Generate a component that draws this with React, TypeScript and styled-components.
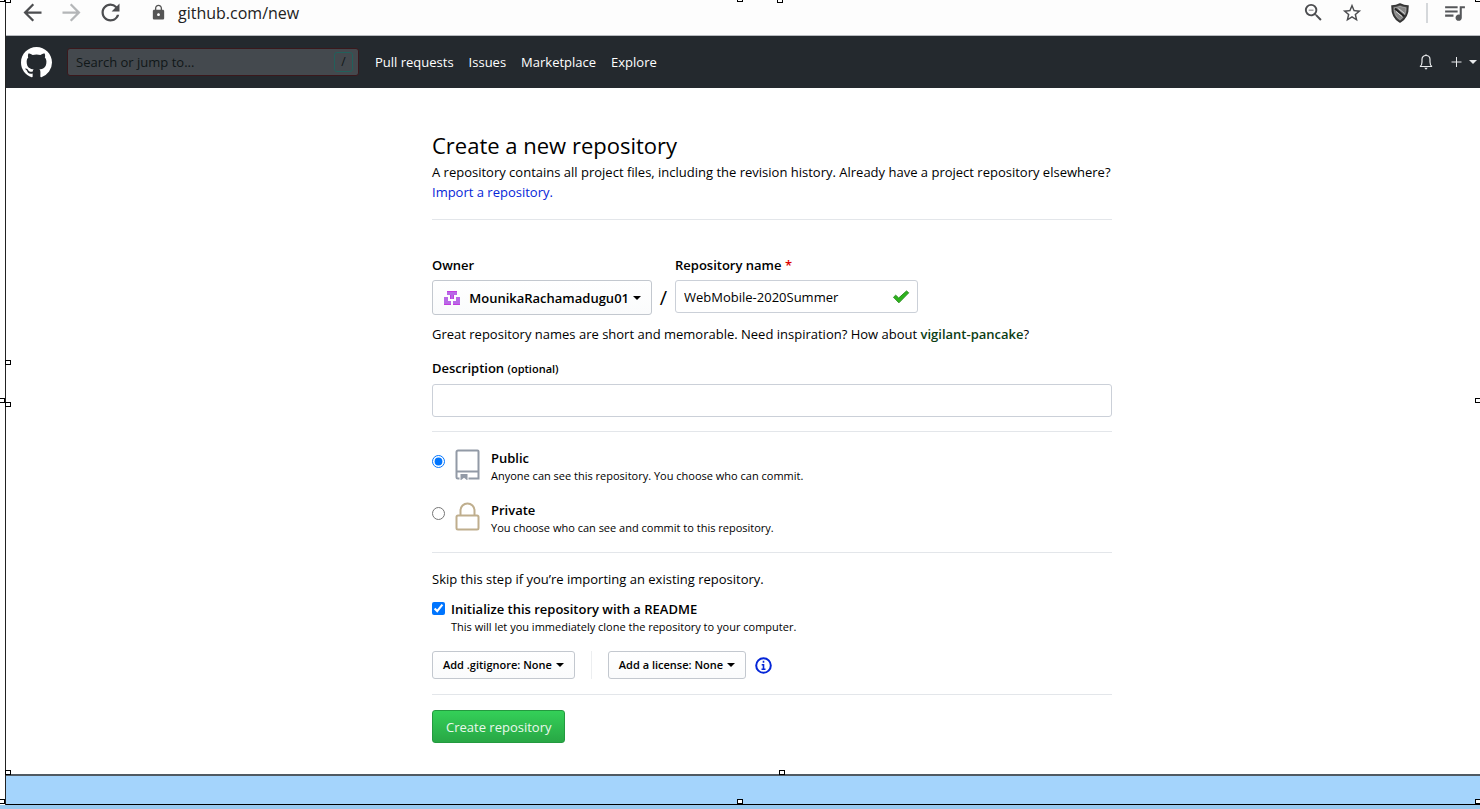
import React from "react";
import styled, { createGlobalStyle } from "styled-components";
import {
  MdArrowBack,
  MdArrowForward,
  MdLock,
  MdQueueMusic,
  MdRefresh,
  MdStarBorder,
  MdZoomOut,
} from "react-icons/md";

const GlobalStyle = createGlobalStyle`
  *, *::before, *::after { box-sizing: border-box; }
  body {
    margin: 0;
    background: #fff;
    color: #000;
    font-family: "Open Sans", "Noto Sans", sans-serif;
    font-size: 13px;
    line-height: 20px;
  }
  button, input { font: inherit; color: inherit; margin: 0; }
  a { text-decoration: none; }
  h1, p { margin: 0; }
  svg { display: block; flex: none; }
`;

const Canvas = styled.div`
  position: relative;
  display: flex;
  flex-direction: column;
  min-height: 100vh;
  overflow: hidden;
`;

const Frame = styled.div`
  flex: 1;
  display: flex;
  flex-direction: column;
  margin-left: 5px;
  border-left: 1px solid #222;
`;

const BrowserBar = styled.div`
  display: flex;
  align-items: center;
  height: 36px;
  padding: 0 13px 10px 13px;
  border-bottom: 1px solid #b8bbc0;
  background: #fdfdfd;
`;

const IconButton = styled.button<{ $tone?: string }>`
  display: flex;
  align-items: center;
  justify-content: center;
  width: 26px;
  height: 26px;
  padding: 0;
  border: 0;
  background: none;
  color: ${(p) => p.$tone ?? "#4c4d50"};
`;

const BrowserNav = styled.div`
  display: flex;
  gap: 13px;
`;

const Address = styled.div`
  flex: 1;
  display: flex;
  align-items: center;
  gap: 11px;
  margin-left: 27px;
  color: #222;
  font-size: 16px;
`;

const BrowserTools = styled.div`
  display: flex;
  align-items: center;
  gap: 13px;
`;

const PageActions = styled.div`
  display: flex;
  gap: 13px;
  margin-right: 9px;
`;

const ToolDivider = styled.span`
  width: 2px;
  height: 20px;
  background: #d5d8db;
`;

const SiteHeader = styled.header`
  display: flex;
  align-items: center;
  height: 52px;
  padding: 0 3px 0 15px;
  background: #24292e;
  color: #fff;
`;

const LogoLink = styled.a`
  color: #fff;
`;

const SearchBox = styled.label`
  display: flex;
  align-items: center;
  width: 292px;
  height: 28px;
  margin-left: 15px;
  padding: 0 5px 0 8px;
  border: 1px solid #3a181c;
  border-radius: 3px;
  background: #44494e;
  color: #101718;
`;

const SearchInput = styled.input`
  flex: 1;
  min-width: 0;
  padding: 0;
  border: 0;
  outline: 0;
  background: none;
  &::placeholder { color: #101718; opacity: 1; }
`;

const SlashKey = styled.span`
  width: 19px;
  height: 20px;
  border: 1px solid #22605b;
  border-radius: 3px;
  font-size: 12px;
  line-height: 18px;
  text-align: center;
`;

const SiteNav = styled.nav`
  flex: 1;
  display: flex;
  gap: 15px;
  margin-left: 16px;
`;

const NavLink = styled.a`
  color: #fff;
`;

const HeaderTools = styled.div`
  display: flex;
  align-items: center;
  gap: 18px;
`;

const HeaderButton = styled.button`
  display: flex;
  align-items: center;
  gap: 6px;
  padding: 0;
  border: 0;
  background: none;
  color: #e8eaec;
`;

const Caret = styled.span`
  width: 0;
  border: 4px solid transparent;
  border-top-color: currentColor;
  border-bottom: 0;
`;

const Main = styled.main`
  flex: 1;
  display: grid;
  grid-template-columns: 426fr minmax(0, 680px) 368fr;
  padding: 42px 0 30px;
`;

const Form = styled.form`
  grid-column: 2;
`;

const Title = styled.h1`
  margin-bottom: 2px;
  font-size: 22px;
  font-weight: 400;
  line-height: 30px;
`;

const TextLink = styled.a`
  color: #0526d8;
`;

const Rule = styled.hr<{ $top: number; $bottom: number }>`
  height: 1px;
  margin: ${(p) => p.$top}px 0 ${(p) => p.$bottom}px;
  border: 0;
  background: #e3e6ea;
`;

const OwnerRow = styled.div`
  display: flex;
  align-items: flex-start;
`;

const Field = styled.div`
  display: flex;
  flex-direction: column;
  gap: 5px;
`;

const FieldLabel = styled.label`
  font-weight: 600;
`;

const Required = styled.span`
  color: #d00;
`;

const Optional = styled.span`
  font-size: 11px;
`;

const MenuButton = styled.button<{ $large?: boolean }>`
  display: flex;
  align-items: center;
  justify-content: center;
  gap: 4px;
  height: ${(p) => (p.$large ? 35 : 28)}px;
  padding: 0 10px;
  border: 1px solid #c3c8cf;
  border-radius: 3px;
  background: linear-gradient(#fff, #fafbfc);
  font-size: ${(p) => (p.$large ? 13 : 11)}px;
  font-weight: 600;
  white-space: nowrap;
`;

const OwnerButton = styled(MenuButton)`
  justify-content: flex-end;
  width: 220px;
`;

const OwnerName = styled.span`
  margin-left: 4px;
`;

const Slash = styled.span`
  width: 23px;
  margin-top: 25px;
  font-size: 20px;
  line-height: 35px;
  text-align: center;
`;

const InputShell = styled.div`
  display: flex;
  align-items: center;
  width: 243px;
  height: 33px;
  padding: 0 7px 0 8px;
  border: 1px solid #cbd0d8;
  border-radius: 3px;
`;

const BareInput = styled.input`
  flex: 1;
  min-width: 0;
  padding: 0;
  border: 0;
  outline: 0;
  background: none;
`;

const Hint = styled.p`
  margin: 9px 0 14px;
`;

const Suggestion = styled.strong`
  color: #0b3d14;
  font-weight: 600;
`;

const TextInput = styled.input`
  width: 100%;
  height: 33px;
  padding: 0 8px;
  border: 1px solid #cbd0d8;
  border-radius: 3px;
`;

const Choices = styled.div`
  display: flex;
  flex-direction: column;
  gap: 16px;
`;

const Choice = styled.label`
  display: grid;
  grid-template-columns: 13px 26px 1fr;
  column-gap: 10px;
  align-items: start;
`;

const Tick = styled.input`
  width: 13px;
  height: 13px;
`;

const ChoiceRadio = styled(Tick)`
  margin-top: 7px;
`;

const ChoiceText = styled.span`
  display: flex;
  flex-direction: column;
`;

const ChoiceName = styled.span`
  font-weight: 600;
`;

const Note = styled.span`
  font-size: 11px;
  line-height: 16px;
`;

const ReadmeOption = styled.label`
  display: grid;
  grid-template-columns: 13px 1fr;
  column-gap: 6px;
  align-items: start;
  margin-top: 10px;
`;

const ReadmeTick = styled(Tick)`
  margin-top: 3px;
`;

const TemplateRow = styled.div`
  display: flex;
  align-items: center;
  margin-top: 16px;
`;

const TemplateDivider = styled.span`
  width: 1px;
  height: 28px;
  margin: 0 16px;
  background: #eceef0;
`;

const InfoButton = styled.button`
  margin-left: 9px;
  padding: 0;
  border: 0;
  background: none;
  color: #0526d8;
`;

const SubmitButton = styled.button`
  height: 33px;
  padding: 0 13px;
  border: 1px solid #239a3f;
  border-radius: 3px;
  background: linear-gradient(#34d058, #28a745);
  color: #e9f8ec;
  white-space: nowrap;
`;

const Desktop = styled.div`
  height: 31px;
  border-top: 2px solid #505a62;
  border-bottom: 1px solid #000;
  background: #a4d4fc;
`;

const BottomStrip = styled.div`
  height: 4px;
  background: #98c9ef;
`;

const Handle = styled.span<{ $x: string; $y: string }>`
  position: absolute;
  left: ${(p) => p.$x};
  top: ${(p) => p.$y};
  width: 6px;
  height: 5px;
  border: 1px solid #000;
  background: #fff;
`;

const handles: [string, string][] = [
  ["-1px", "-3px"],
  ["5px", "-2px"],
  ["calc(50% - 3px)", "-3px"],
  ["calc(50% + 37px)", "-2px"],
  ["calc(100% - 5px)", "-3px"],
  ["5px", "360px"],
  ["-1px", "398px"],
  ["5px", "402px"],
  ["calc(100% - 5px)", "398px"],
  ["5px", "calc(100% - 39px)"],
  ["calc(50% + 39px)", "calc(100% - 39px)"],
  ["-1px", "calc(100% - 10px)"],
  ["calc(50% - 3px)", "calc(100% - 10px)"],
  ["calc(100% - 5px)", "calc(100% - 10px)"],
];

const GithubMark = () => (
  <svg width="31" height="31" viewBox="0 0 16 16" fill="currentColor">
    <path d="M8 0C3.58 0 0 3.58 0 8c0 3.54 2.29 6.53 5.47 7.59.4.07.55-.17.55-.38 0-.19-.01-.82-.01-1.49-2.01.37-2.53-.49-2.69-.94-.09-.23-.48-.94-.82-1.13-.28-.15-.68-.52-.01-.53.63-.01 1.08.58 1.23.82.72 1.21 1.87.87 2.33.66.07-.52.28-.87.51-1.07-1.78-.2-3.64-.89-3.64-3.95 0-.87.31-1.59.82-2.15-.08-.2-.36-1.02.08-2.12 0 0 .67-.21 2.2.82.64-.18 1.32-.27 2-.27.68 0 1.36.09 2 .27 1.53-1.04 2.2-.82 2.2-.82.44 1.1.16 1.92.08 2.12.51.56.82 1.27.82 2.15 0 3.07-1.87 3.75-3.65 3.95.29.25.54.73.54 1.48 0 1.07-.01 1.93-.01 2.2 0 .21.15.46.55.38A8.013 8.013 0 0016 8c0-4.42-3.58-8-8-8z" />
  </svg>
);

const BellIcon = () => (
  <svg width="14" height="16" viewBox="0 0 14 16" fill="none" stroke="currentColor">
    <path d="M1 12.500c1.500-.8 2-2 2-4.500V5.500C3 3 4.500 1.500 7 1.500S11 3 11 5.500V8c0 2.500.5 3.700 2 4.500z" strokeWidth="1.200" />
    <path d="M5.200 13.800h3.600L7 15.800z" fill="currentColor" stroke="none" />
    <path d="M7 .2v1.300" />
  </svg>
);

const PlusIcon = () => (
  <svg width="12" height="12" viewBox="0 0 12 12" stroke="currentColor">
    <path d="M5.500 1v10M.5 6h10" />
  </svg>
);

const ShieldIcon = () => (
  <svg width="20" height="20" viewBox="0 0 20 20" fill="none" stroke="#333">
    <path d="M10 1c3 1.500 5.500 2 8 2 .2 7-1.500 12.500-8 16C3.500 15.500 1.800 10 2 3c2.500 0 5-.5 8-2z" fill="#555" strokeWidth="1.500" />
    <path d="M10 3.300c2.100.9 4 1.400 5.800 1.400 0 5.300-1.400 9.200-5.800 11.900C5.600 13.900 4.200 10 4.200 4.700c1.800 0 3.700-.5 5.800-1.400z" fill="#858585" stroke="#aaa" strokeWidth=".8" />
    <path d="M5 5.500l9.500 8" stroke="#222" strokeWidth="2" />
    <path d="M6 8.500l6 5M8.500 5.500l6 5" stroke="#ddd" />
  </svg>
);

const IdenticonIcon = () => (
  <svg width="18" height="16" viewBox="0 0 18 16" fill="#b968e6">
    <path d="M4 1h10v4h-3v4H7V5H4zM1 7h4v4h3v4H1zM17 7h-4v4h-3v4h7z" />
    <path d="M4 1.500h10M7.500 9V5M10.500 9V5M1 14.500h7M10 14.500h7" stroke="#c23be0" />
  </svg>
);

const CheckIcon = () => (
  <svg width="18" height="14" viewBox="0 0 18 14">
    <path d="M1.500 7.200l2.200-2 3 2.800L14.500 1l2.200 1.800L6.900 12.800z" fill="#2cb51b" stroke="#2c8d22" />
  </svg>
);

const RepoIcon = () => (
  <svg width="26" height="32" viewBox="0 0 26 32" fill="none" stroke="#929aa6" strokeWidth="2">
    <path d="M4.500 30.500H3A1.500 1.500 0 0 1 1.500 29V4A1.500 1.500 0 0 1 3 2.500h19.500a1 1 0 0 1 1 1v27H13.500M1.500 23.500h22" />
    <path d="M5.500 26h7v6.500L9 29.800l-3.500 2.700z" fill="#929aa6" stroke="none" />
  </svg>
);

const LockIcon = () => (
  <svg width="26" height="32" viewBox="0 0 26 32" fill="none" stroke="#bfae8d" strokeWidth="2">
    <rect x="1.500" y="15.500" width="22" height="14" rx="1.500" />
    <path d="M5.500 15.500v-5a7 7 0 0 1 14 0v5" />
  </svg>
);

const InfoIcon = () => (
  <svg width="17" height="17" viewBox="0 0 17 17" fill="none" stroke="currentColor">
    <circle cx="8.500" cy="8.500" r="7.300" strokeWidth="2" />
    <path d="M8.500 3.800v2M6.700 7.700h1.800v4.600M6.500 12.300h4" strokeWidth="1.600" />
  </svg>
);

export default function App() {
  return (
    <Canvas>
      <GlobalStyle />
      <Frame>
        <BrowserBar>
          <BrowserNav>
            <IconButton type="button" aria-label="Back"><MdArrowBack size={27} /></IconButton>
            <IconButton type="button" aria-label="Forward" $tone="#b4b6b8"><MdArrowForward size={27} /></IconButton>
            <IconButton type="button" aria-label="Reload"><MdRefresh size={27} /></IconButton>
          </BrowserNav>
          <Address>
            <MdLock size={17} color="#555" />
            <span>github.com/new</span>
          </Address>
          <BrowserTools>
            <PageActions>
              <IconButton type="button" aria-label="Zoom out"><MdZoomOut size={23} /></IconButton>
              <IconButton type="button" aria-label="Bookmark"><MdStarBorder size={22} /></IconButton>
            </PageActions>
            <IconButton type="button" aria-label="Shield extension"><ShieldIcon /></IconButton>
            <ToolDivider />
            <IconButton type="button" aria-label="Media controls" $tone="#55575a"><MdQueueMusic size={25} /></IconButton>
          </BrowserTools>
        </BrowserBar>

        <SiteHeader>
          <LogoLink href="#home" aria-label="Homepage"><GithubMark /></LogoLink>
          <SearchBox>
            <SearchInput type="text" placeholder="Search or jump to..." aria-label="Search or jump to" />
            <SlashKey>/</SlashKey>
          </SearchBox>
          <SiteNav>
            <NavLink href="#pulls">Pull requests</NavLink>
            <NavLink href="#issues">Issues</NavLink>
            <NavLink href="#marketplace">Marketplace</NavLink>
            <NavLink href="#explore">Explore</NavLink>
          </SiteNav>
          <HeaderTools>
            <HeaderButton type="button" aria-label="Notifications"><BellIcon /></HeaderButton>
            <HeaderButton type="button" aria-label="Create new"><PlusIcon /><Caret /></HeaderButton>
          </HeaderTools>
        </SiteHeader>

        <Main>
          <Form>
            <Title>Create a new repository</Title>
            <p>
              A repository contains all project files, including the revision history. Already have a project repository elsewhere?
              <br />
              <TextLink href="#import">Import a repository.</TextLink>
            </p>
            <Rule $top={17} $bottom={35} />

            <OwnerRow>
              <Field>
                <FieldLabel htmlFor="owner">Owner</FieldLabel>
                <OwnerButton type="button" id="owner" $large>
                  <IdenticonIcon />
                  <OwnerName>MounikaRachamadugu01</OwnerName>
                  <Caret />
                </OwnerButton>
              </Field>
              <Slash>/</Slash>
              <Field>
                <FieldLabel htmlFor="repo-name">Repository name <Required>*</Required></FieldLabel>
                <InputShell>
                  <BareInput id="repo-name" type="text" defaultValue="WebMobile-2020Summer" />
                  <CheckIcon />
                </InputShell>
              </Field>
            </OwnerRow>
            <Hint>
              Great repository names are short and memorable. Need inspiration? How about <Suggestion>vigilant-pancake</Suggestion>?
            </Hint>

            <Field>
              <FieldLabel htmlFor="description">Description <Optional>(optional)</Optional></FieldLabel>
              <TextInput id="description" type="text" />
            </Field>
            <Rule $top={14} $bottom={16} />

            <Choices>
              <Choice>
                <ChoiceRadio type="radio" name="visibility" defaultChecked />
                <RepoIcon />
                <ChoiceText>
                  <ChoiceName>Public</ChoiceName>
                  <Note>Anyone can see this repository. You choose who can commit.</Note>
                </ChoiceText>
              </Choice>
              <Choice>
                <ChoiceRadio type="radio" name="visibility" />
                <LockIcon />
                <ChoiceText>
                  <ChoiceName>Private</ChoiceName>
                  <Note>You choose who can see and commit to this repository.</Note>
                </ChoiceText>
              </Choice>
            </Choices>
            <Rule $top={16} $bottom={16} />

            <p>Skip this step if you’re importing an existing repository.</p>
            <ReadmeOption>
              <ReadmeTick type="checkbox" defaultChecked />
              <ChoiceText>
                <ChoiceName>Initialize this repository with a README</ChoiceName>
                <Note>This will let you immediately clone the repository to your computer.</Note>
              </ChoiceText>
            </ReadmeOption>
            <TemplateRow>
              <MenuButton type="button">Add .gitignore: None <Caret /></MenuButton>
              <TemplateDivider />
              <MenuButton type="button">Add a license: None <Caret /></MenuButton>
              <InfoButton type="button" aria-label="License help"><InfoIcon /></InfoButton>
            </TemplateRow>
            <Rule $top={15} $bottom={15} />
            <SubmitButton type="submit">Create repository</SubmitButton>
          </Form>
        </Main>
        <Desktop />
      </Frame>
      <BottomStrip />
      {handles.map(([x, y]) => (
        <Handle key={x + y} $x={x} $y={y} />
      ))}
    </Canvas>
  );
}
